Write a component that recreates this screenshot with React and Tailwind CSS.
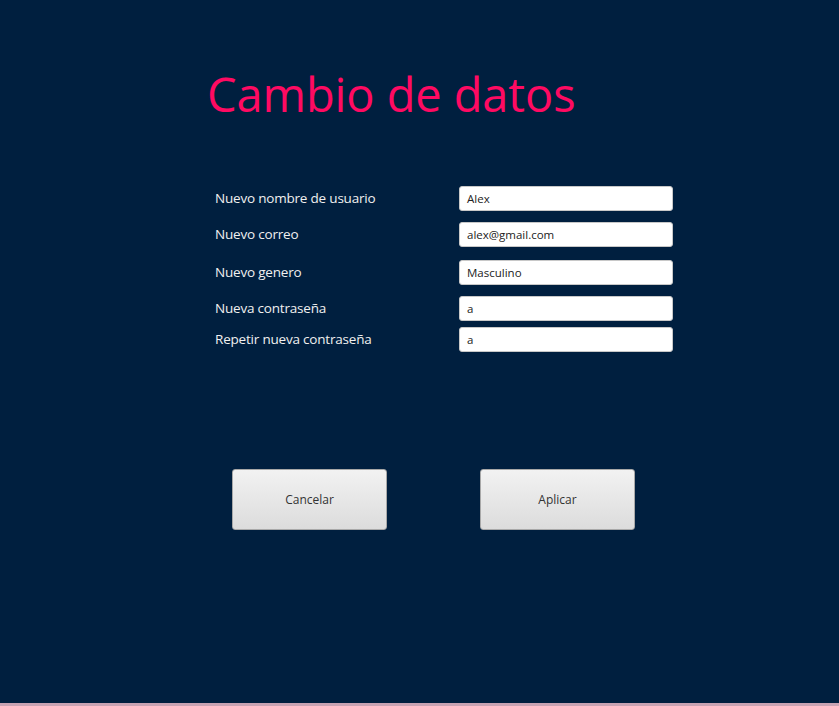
export default function App() {
  const fields = [
    { label: 'Nuevo nombre de usuario', value: 'Alex', mt: 'mt-0' },
    { label: 'Nuevo correo', value: 'alex@gmail.com', mt: 'mt-[11px]' },
    { label: 'Nuevo genero', value: 'Masculino', mt: 'mt-[13px]' },
    { label: 'Nueva contraseña', value: 'a', mt: 'mt-[11px]' },
    { label: 'Repetir nueva contraseña', value: 'a', mt: 'mt-[6px]' },
  ]

  return (
    <div className="h-[706px] w-full flex flex-col bg-[#001f3f] font-['Open_Sans',sans-serif]">
      <div className="flex-1 flex flex-col">
        <h1 className="ml-[207px] mt-[64px] text-[47px] leading-[60px] text-[#ff0a62] tracking-[-0.1px]">
          Cambio de datos
        </h1>

        {/* Form rows */}
        <div className="mt-[62px] flex flex-col">
          {fields.map(({ label, value, mt }) => (
            <div key={label} className={`flex items-center h-[25px] ${mt}`}>
              <span className="ml-[215px] w-[244px] text-[13.5px] text-[#f0f0f0] tracking-[-0.2px]">{label}</span>
              <div className="w-[214px] h-[25px] bg-white rounded-[3px] border border-[#c8c8c8] flex items-center px-[7px] text-[11.5px] text-[#222]">
                {value}
              </div>
            </div>
          ))}
        </div>

        {/* Buttons */}
        <div className="mt-[117px] flex">
          <button className="ml-[232px] w-[155px] h-[61px] rounded-[3px] border border-[#a8a8a8] bg-gradient-to-b from-[#f2f2f2] to-[#dcdcdc] text-[12px] text-[#333]">
            Cancelar
          </button>
          <button className="ml-[93px] w-[155px] h-[61px] rounded-[3px] border border-[#a8a8a8] bg-gradient-to-b from-[#f2f2f2] to-[#dcdcdc] text-[12px] text-[#333]">
            Aplicar
          </button>
        </div>
      </div>
      <div className="h-[3px] bg-[#c9a3b3]" />
    </div>
  )
}
